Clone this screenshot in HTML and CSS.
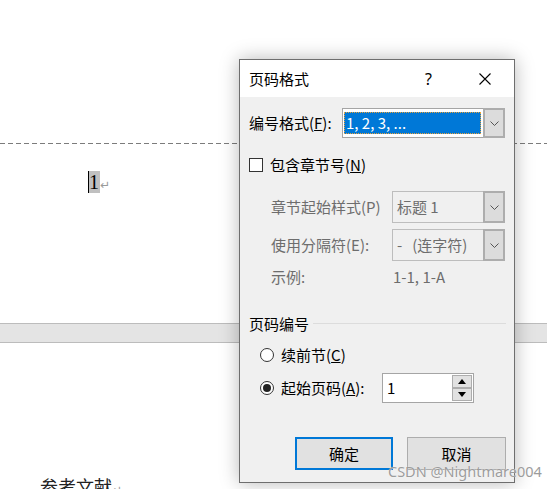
FILE: index.html
```html
<!DOCTYPE html>
<html lang="zh-CN">
<head>
  <meta charset="UTF-8">
  <meta name="viewport" content="width=device-width, initial-scale=1.0">
  <title>页码格式</title>
  <link rel="stylesheet" href="styles.css">
</head>
<body>
  <div class="doc">
    <div class="page page-top">
      <div class="header-area"></div>
      <div class="dash-line"></div>
      <p class="line-num"><span class="sel">1</span><span class="mark">↵</span></p>
    </div>
    <div class="page-gap"></div>
    <div class="page page-bottom">
      <p class="heading">参考文献<span class="mark">↵</span></p>
    </div>
  </div>

  <div class="dialog">
    <div class="titlebar">
      <span class="title">页码格式</span>
      <span class="help">?</span>
      <span class="close">
        <svg width="12" height="12" viewBox="0 0 12 12"><path d="M0.5 0.5L11.5 11.5M11.5 0.5L0.5 11.5" stroke="#000" stroke-width="1.1" fill="none"/></svg>
      </span>
    </div>

    <div class="dialog-body">
      <div class="row fmt-row">
        <span class="label fmt-label">编号格式(<u>F</u>):</span>
        <div class="combo">
          <div class="value"><span class="hl">1, 2, 3, ...</span></div>
          <div class="combo-btn"><svg width="9" height="5" viewBox="0 0 9 5"><polyline points="0.5,0.5 4.5,4.5 8.5,0.5" stroke="#555" fill="none"/></svg></div>
        </div>
      </div>

      <div class="row check-row">
        <span class="checkbox"></span>
        <span>包含章节号(<u>N</u>)</span>
      </div>

      <div class="row sub-row">
        <span class="label sub-label">章节起始样式(P)</span>
        <div class="combo combo-off">
          <div class="value">标题 1</div>
          <div class="combo-btn"><svg width="9" height="5" viewBox="0 0 9 5"><polyline points="0.5,0.5 4.5,4.5 8.5,0.5" stroke="#555" fill="none"/></svg></div>
        </div>
      </div>

      <div class="row sub-row sub-row-2">
        <span class="label sub-label">使用分隔符(E):</span>
        <div class="combo combo-off">
          <div class="value">-&nbsp;&nbsp;&nbsp;(连字符)</div>
          <div class="combo-btn"><svg width="9" height="5" viewBox="0 0 9 5"><polyline points="0.5,0.5 4.5,4.5 8.5,0.5" stroke="#555" fill="none"/></svg></div>
        </div>
      </div>

      <div class="row sample-row">
        <span class="label sub-label">示例:</span>
        <span class="sample-value">1-1, 1-A</span>
      </div>

      <div class="row group-row">
        <span>页码编号</span>
        <span class="group-line"></span>
      </div>

      <div class="row radio-row">
        <span class="radio"></span>
        <span>续前节(<u>C</u>)</span>
      </div>

      <div class="row radio-row start-row">
        <span class="radio checked"></span>
        <span class="start-label">起始页码(<u>A</u>):</span>
        <div class="spin-input">
          <div class="spin-value">1</div>
          <div class="spin">
            <span class="spin-btn"><svg width="8" height="5" viewBox="0 0 8 5"><polygon points="0,5 4,0 8,5" fill="#000"/></svg></span>
            <span class="spin-btn"><svg width="8" height="5" viewBox="0 0 8 5"><polygon points="0,0 8,0 4,5" fill="#000"/></svg></span>
          </div>
        </div>
      </div>

      <div class="buttons">
        <span class="btn btn-primary">确定</span>
        <span class="btn">取消</span>
      </div>
    </div>
  </div>

  <div class="watermark">CSDN @Nightmare004</div>
</body>
</html>
```

FILE: styles.css
```css
*{
  margin:0;
  padding:0;
  box-sizing:border-box;
}
html,body{
  height:100%;
  overflow:hidden;
}
body{
  background:#fff;
  font-family:"Noto Sans CJK SC",sans-serif;
  color:#000;
}

/* document behind the dialog */
.page-top{
  height:323px;
  overflow:hidden;
}
.header-area{
  height:143px;
}
.dash-line{
  height:1px;
  background:repeating-linear-gradient(90deg,#7c7c7c 0 5px,transparent 5px 8px);
}
.line-num{
  margin:28px 0 0 88px;
  height:20px;
  line-height:20px;
  font-family:"Liberation Serif",serif;
  font-size:20px;
}
.sel{
  background:#c0c0c0;
  border-left:1px solid #000;
  padding:0 1px 0 0;
}
.mark{
  color:#9a9a9a;
  font-family:"DejaVu Sans",sans-serif;
  font-size:12px;
}
.page-gap{
  height:20px;
  background:#e4e4e4;
  border-top:1px solid #bcbcbc;
  border-bottom:1px solid #bcbcbc;
}
.heading{
  margin:132px 0 0 40px;
  font-size:18px;
  line-height:22px;
  color:#222;
}

/* dialog */
.dialog{
  position:absolute;
  left:239px;
  top:59px;
  width:276px;
  height:424px;
  border:1px solid #6e6e6e;
  background:#f0f0f0;
  box-shadow:0 0 18px rgba(0,0,0,.28);
  font-size:15px;
  line-height:20px;
}
.titlebar{
  height:37px;
  background:#fff;
  display:flex;
  align-items:center;
}
.title{
  flex:1;
  padding-left:9px;
}
.help{
  width:55px;
  text-align:center;
  font-family:"Noto Sans",sans-serif;
  font-size:16px;
}
.close{
  width:58px;
  display:flex;
  justify-content:center;
}

.dialog-body{
  padding:11px 8px 0 9px;
}
.row{
  display:flex;
  align-items:center;
}
.label{
  flex:none;
}
.fmt-row{
  height:30px;
}
.fmt-label{
  width:93px;
}
.combo{
  display:flex;
  width:163px;
  height:30px;
  border:1px solid #a5a5a5;
  background:#fff;
}
.combo .value{
  flex:1;
  padding:3px 2px 3px 1px;
  white-space:nowrap;
}
.hl{
  display:block;
  height:22px;
  line-height:21px;
  padding-left:2px;
  background:#0078d7;
  color:#fff;
  outline:1px dotted #e9a33b;
  outline-offset:-1px;
}
.combo-btn{
  width:22px;
  margin:-1px -1px -1px 0;
  border:2px solid #adadad;
  background:#dcdcdc;
  display:flex;
  align-items:center;
  justify-content:center;
}

.check-row{
  margin-top:17px;
  height:20px;
}
.checkbox{
  width:14px;
  height:14px;
  border:1px solid #333;
  background:#fff;
  margin-right:7px;
}

.sub-row{
  margin-top:16px;
  height:32px;
  padding-left:22px;
  color:#6d6d6d;
}
.sub-row-2{
  margin-top:6px;
}
.sub-label{
  width:121px;
}
.combo-off{
  width:113px;
  height:32px;
  background:#f0f0f0;
  border-color:#bdbdbd;
}
.combo-off .value{
  padding:5px 4px;
}
.sample-row{
  margin-top:6px;
  height:20px;
  padding-left:22px;
  color:#6d6d6d;
}
.sample-value{
  padding-left:1px;
}

.group-row{
  margin-top:27px;
  height:20px;
}
.group-line{
  flex:1;
  height:1px;
  margin:-2px 0 0 4px;
  background:#dcdcdc;
}

.radio-row{
  margin-top:11px;
  height:20px;
  padding-left:11px;
}
.radio{
  width:14px;
  height:14px;
  border:1px solid #333;
  border-radius:50%;
  background:#fff;
  margin-right:7px;
  display:flex;
  align-items:center;
  justify-content:center;
}
.radio.checked::after{
  content:"";
  width:8px;
  height:8px;
  border-radius:50%;
  background:#222;
}
.start-row{
  margin-top:8px;
  height:30px;
}
.start-label{
  width:101px;
}
.spin-input{
  display:flex;
  width:92px;
  height:30px;
  border:1px solid #a5a5a5;
  background:#fff;
}
.spin-value{
  flex:1;
  padding:4px 0 0 4px;
}
.spin{
  width:21px;
  display:flex;
  flex-direction:column;
  padding:1px 1px 1px 0;
}
.spin-btn{
  flex:1;
  border:1px solid #adadad;
  background:#e1e1e1;
  display:flex;
  align-items:center;
  justify-content:center;
}

.buttons{
  margin-top:34px;
  display:flex;
  justify-content:flex-end;
  gap:14px;
}
.btn{
  width:99px;
  height:33px;
  border:1px solid #adadad;
  background:#e1e1e1;
  display:flex;
  align-items:center;
  justify-content:center;
}
.btn-primary{
  width:98px;
  border:2px solid #0078d7;
}

.watermark{
  position:absolute;
  left:388px;
  top:461px;
  font-family:"Noto Sans",sans-serif;
  font-size:14.5px;
  line-height:20px;
  color:#9c9c9c;
  text-shadow:0 0 1px #fff;
  white-space:nowrap;
}
```
